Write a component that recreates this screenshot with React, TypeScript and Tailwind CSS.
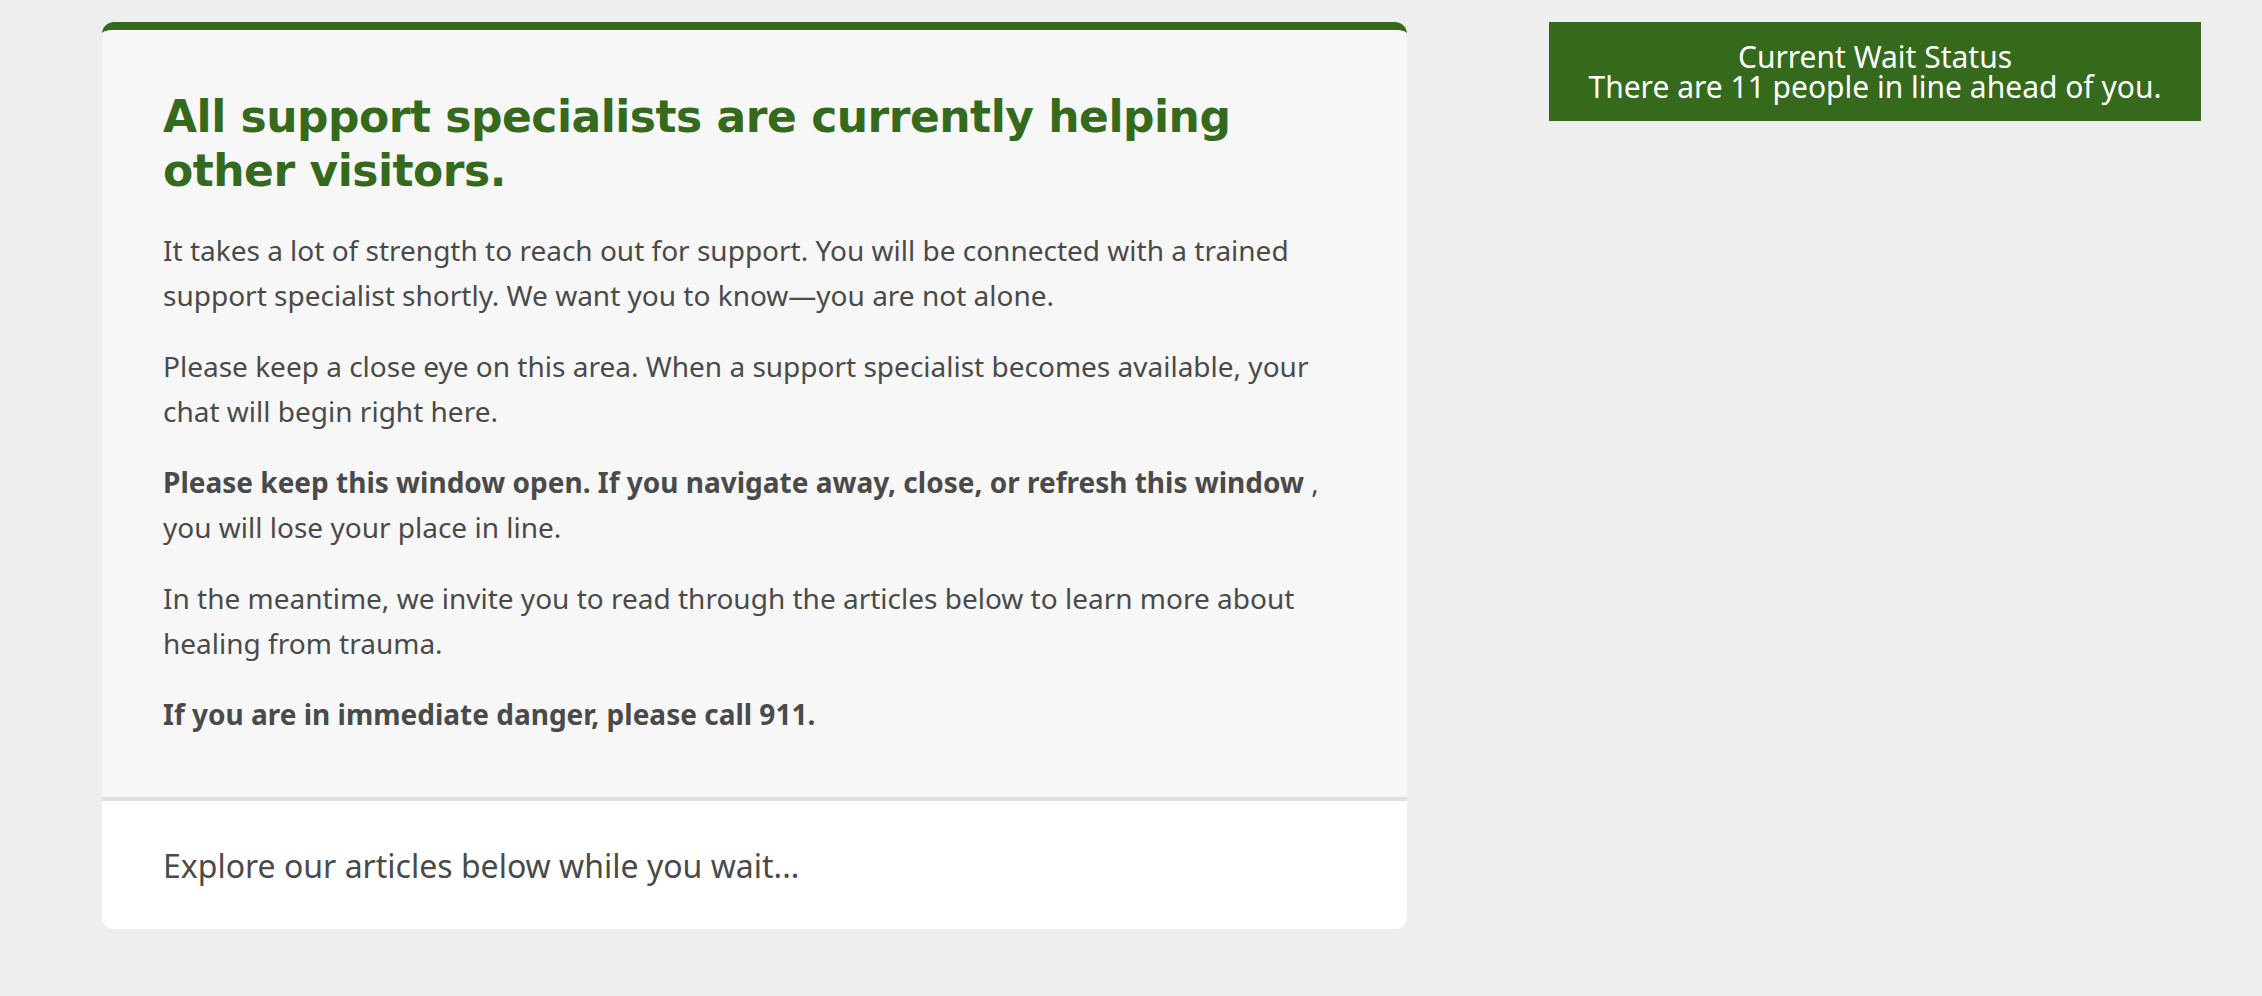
export default function App() {
  const body = "font-['Noto_Sans',sans-serif]"
  return (
    <div className={`min-h-[996px] bg-[#eeeeee] ${body}`}>
      <div className="flex items-start pl-[102px] pt-[22px] gap-[142px]">
        {/* Waiting card */}
        <div className="w-[1305px] shrink-0 rounded-[12px] border-t-8 border-[#356a1d] bg-white overflow-hidden">
          <div className="bg-[#f7f7f7] px-[61px] pt-[60px] pb-[60px] border-b-4 border-[#e0e0e0]">
            <h1 className="font-['DejaVu_Sans',sans-serif] font-bold text-[44px] leading-[54px] tracking-[-0.5px] text-[#356a1d] mb-[30px]">
              All support specialists are currently helping
              <br />
              other visitors.
            </h1>
            <div className="text-[28px] leading-[45px] text-[#4a4a4a] space-y-[26px]">
              <p>
                It takes a lot of strength to reach out for support. You will be connected with a trained
                <br />
                support specialist shortly. We want you to know—you are not alone.
              </p>
              <p>
                Please keep a close eye on this area. When a support specialist becomes available, your
                <br />
                chat will begin right here.
              </p>
              <p>
                <strong className="font-bold">
                  Please keep this window open. If you navigate away, close, or refresh this window
                </strong>{' '}
                ,
                <br />
                you will lose your place in line.
              </p>
              <p>
                In the meantime, we invite you to read through the articles below to learn more about
                <br />
                healing from trauma.
              </p>
              <p className="font-bold">If you are in immediate danger, please call 911.</p>
            </div>
          </div>
          <div className="px-[61px] pt-[45px] pb-[43px]">
            <p className="text-[32px] leading-[40px] text-[#4a4a4a]">Explore our articles below while you wait...</p>
          </div>
        </div>

        {/* Wait status */}
        <div className="w-[652px] h-[99px] bg-[#356a1d] text-white text-center text-[30px] leading-[30px] pt-[20px]">
          <div>Current Wait Status</div>
          <div>There are 11 people in line ahead of you.</div>
        </div>
      </div>
    </div>
  )
}
